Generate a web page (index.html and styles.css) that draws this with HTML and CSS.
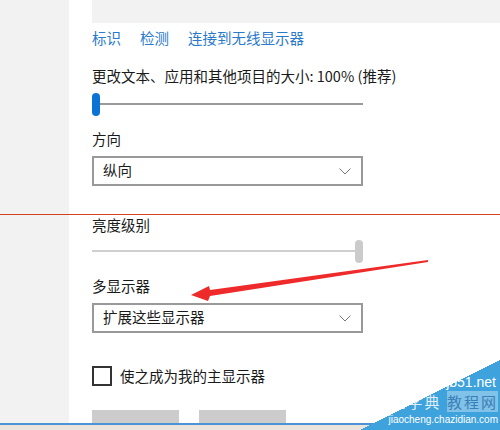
FILE: index.html
```html
<!DOCTYPE html>
<html lang="zh-CN">
<head>
  <meta charset="UTF-8">
  <meta name="viewport" content="width=device-width, initial-scale=1.0">
  <title>显示设置</title>
  <link rel="stylesheet" href="styles.css">
</head>
<body>
  <div class="window">
    <div class="sidebar"></div>
    <div class="content">
      <div class="preview"></div>
      <div class="links">
        <a href="#">标识</a>
        <a href="#">检测</a>
        <a href="#">连接到无线显示器</a>
      </div>

      <div class="label first">更改文本、应用和其他项目的大小: 100% (推荐)</div>
      <div class="slider">
        <span class="thumb"></span>
        <span class="track"></span>
      </div>

      <div class="label">方向</div>
      <div class="select">
        <span>纵向</span>
        <svg class="chevron" width="12" height="7" viewBox="0 0 12 7"><path d="M0.5 0.5 L6 6 L11.5 0.5" fill="none" stroke="#777" stroke-width="1"/></svg>
      </div>

      <div class="label bright">亮度级别</div>
      <div class="slider disabled">
        <span class="track"></span>
        <span class="thumb"></span>
      </div>

      <div class="label">多显示器</div>
      <div class="select">
        <span>扩展这些显示器</span>
        <svg class="chevron" width="12" height="7" viewBox="0 0 12 7"><path d="M0.5 0.5 L6 6 L11.5 0.5" fill="none" stroke="#777" stroke-width="1"/></svg>
      </div>

      <label class="check">
        <span class="box"></span>
        <span>使之成为我的主显示器</span>
      </label>

      <div class="buttons">
        <span class="btn"></span>
        <span class="btn"></span>
      </div>
    </div>

    <!-- annotations drawn over the screenshot -->
    <div class="cut-line"></div>
    <svg class="arrow" width="500" height="430" viewBox="0 0 500 430">
      <path d="M428 260 L210 290 L209 286 L191 295 L208 301 L210 296 L428 262 Z" fill="#ee2a2a"/>
    </svg>
    <div class="taskbar"></div>
    <div class="watermark">
      <span class="wm-site">jb51.net</span>
      <span class="wm-title">查字典 <b>教程网</b></span>
      <span class="wm-url">jiaocheng.chazidian.com</span>
    </div>
  </div>
</body>
</html>
```

FILE: styles.css
```css
body {
  margin: 0;
  font-family: "Noto Sans CJK SC", "Noto Sans", sans-serif;
  font-size: 14.5px;
  color: #1a1a1a;
  background: #fff;
}
.window {
  position: relative;
  display: flex;
  width: 500px;
  height: 430px;
  overflow: hidden;
}
.sidebar {
  width: 69px;
  flex: none;
  background: #f2f2f2;
}
.content {
  flex: 1;
  padding-left: 23px;
  display: flex;
  flex-direction: column;
}
.preview {
  height: 23px;
  background: #f2f2f2;
}
.links {
  display: flex;
  gap: 19px;
  margin-top: 5px;
  line-height: 20px;
}
.links a {
  color: #2a7acb;
  text-decoration: none;
}
.label {
  line-height: 20px;
  margin-top: 13px;
}
.label.first {
  margin-top: 18px;
}
.label.bright {
  margin-top: 29px;
}
.slider {
  width: 271px;
  height: 24px;
  margin-top: 6px;
  display: flex;
  align-items: center;
}
.slider .thumb {
  width: 8px;
  height: 23px;
  border-radius: 4px;
  background: #0a74d6;
  flex: none;
}
.slider .track {
  flex: 1;
  height: 2px;
  background: #9a9a9a;
}
.slider.disabled {
  margin-top: 4px;
}
.slider.disabled .track {
  background: #cfcfcf;
}
.slider.disabled .thumb {
  background: #cbcbcb;
}
.select {
  box-sizing: border-box;
  width: 271px;
  height: 30px;
  margin-top: 7px;
  border: 2px solid #999;
  padding: 0 10px 0 9px;
  display: flex;
  align-items: center;
  justify-content: space-between;
  line-height: 20px;
}
.select span {
  margin-top: -2px;
}
.check {
  display: flex;
  align-items: center;
  gap: 8px;
  margin-top: 33px;
  line-height: 20px;
}
.check .box {
  box-sizing: border-box;
  width: 20px;
  height: 20px;
  border: 2px solid #333;
}
.buttons {
  display: flex;
  gap: 20px;
  margin-top: 24px;
}
.btn {
  width: 87px;
  height: 16px;
  background: #cccccc;
}
.cut-line {
  position: absolute;
  left: 0;
  right: 0;
  top: 214px;
  height: 1px;
  background: #d2401f;
}
.arrow {
  position: absolute;
  left: 0;
  top: 0;
}
.taskbar {
  position: absolute;
  left: 0;
  right: 0;
  bottom: 0;
  height: 5px;
  border-top: 2px solid #4a93d4;
  background: #ebe4dc;
}
.watermark {
  position: absolute;
  right: 0;
  bottom: 0;
  width: 140px;
  height: 70px;
  background: linear-gradient(to bottom right, transparent 50%, #3ea2dc 50%);
  color: #fff;
  font-family: "Liberation Sans", sans-serif;
}
.wm-site {
  position: absolute;
  right: 4px;
  top: 14px;
  font-size: 14px;
  line-height: 16px;
}
.wm-title {
  position: absolute;
  right: 2px;
  top: 33px;
  font-family: "Noto Sans CJK SC", sans-serif;
  font-size: 15px;
  line-height: 18px;
  letter-spacing: 2px;
  white-space: nowrap;
  color: rgba(255, 255, 255, 0.85);
}
.wm-title b {
  font-weight: normal;
  background: rgba(255, 255, 255, 0.35);
  color: #3a7fb8;
}
.wm-url {
  position: absolute;
  right: 2px;
  bottom: 4px;
  font-size: 10px;
  line-height: 12px;
  white-space: nowrap;
}
```
